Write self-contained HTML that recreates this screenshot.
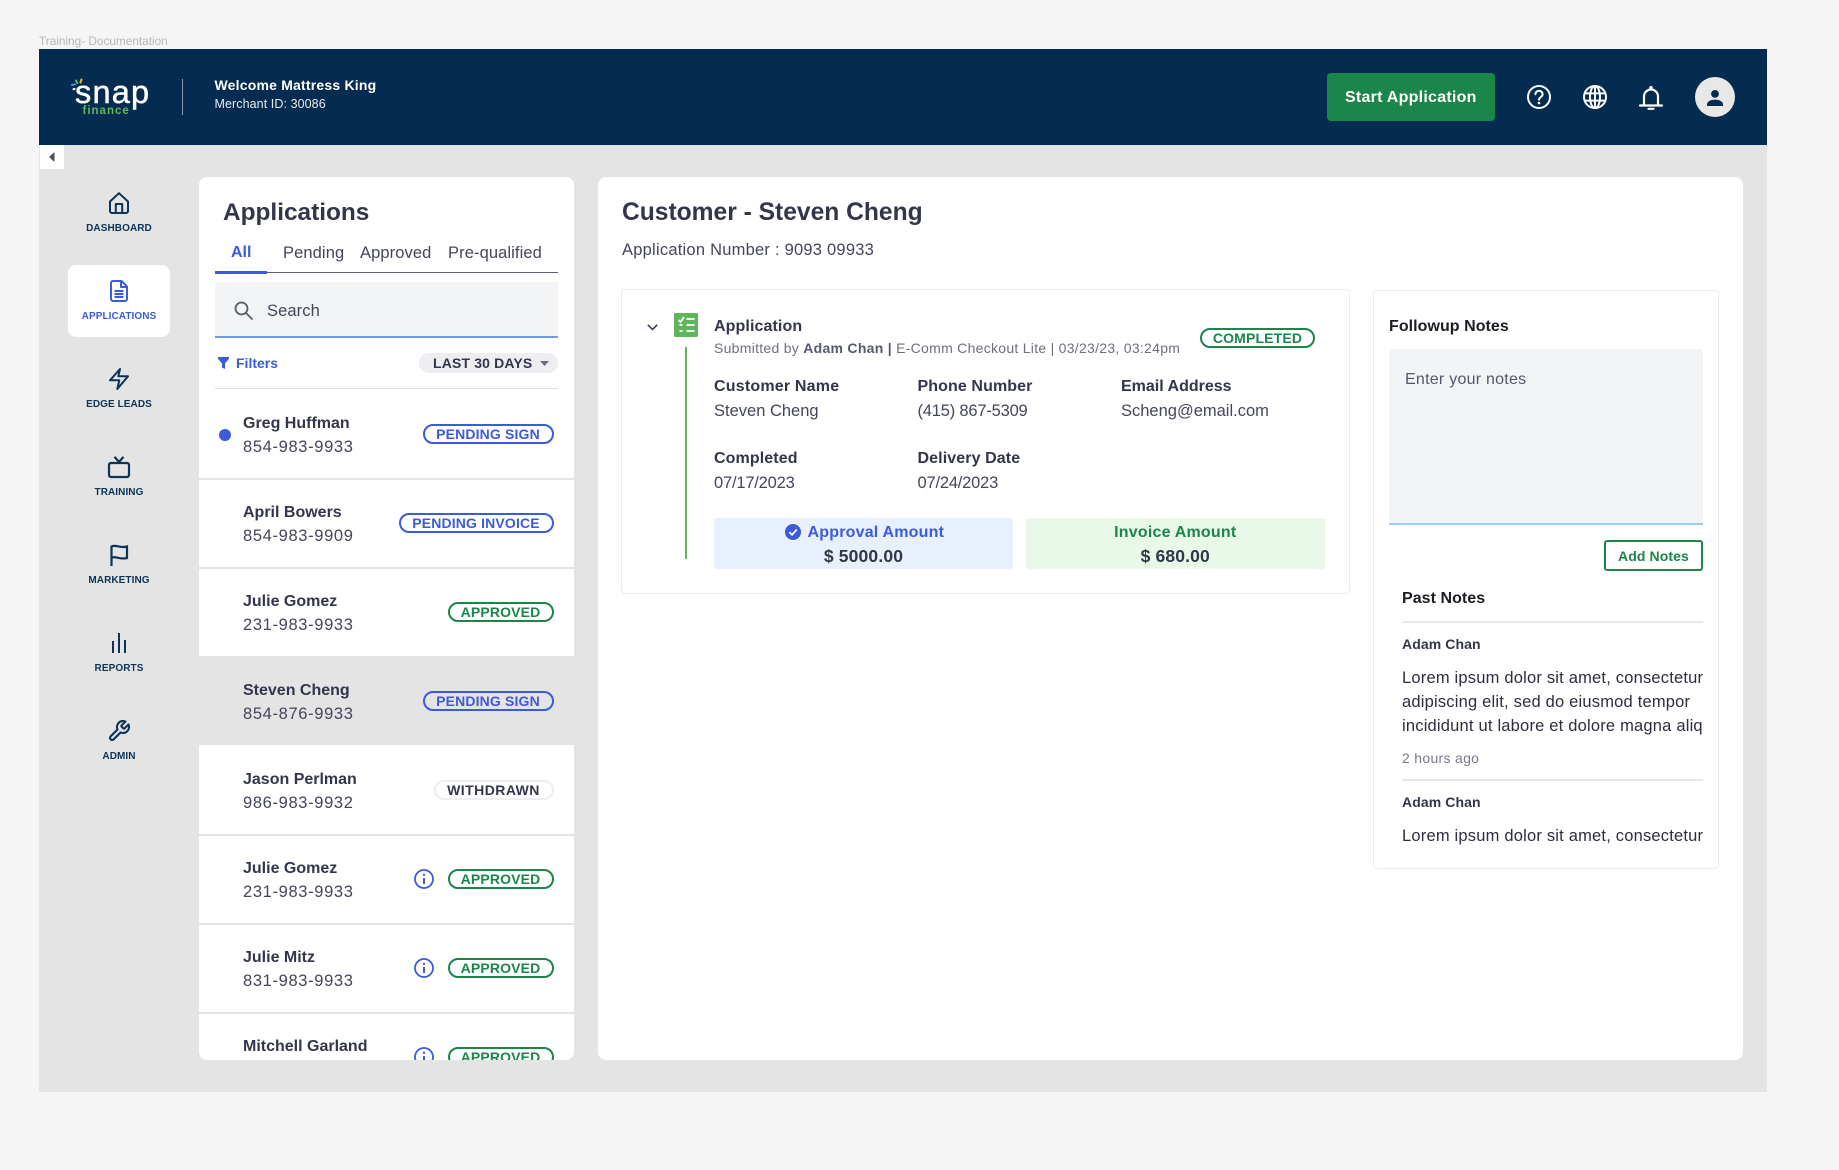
<!DOCTYPE html>
<html lang="en"><head><meta charset="utf-8"><title>Applications</title>
<style>
*{box-sizing:border-box}
html,body{margin:0;padding:0;width:1839px;height:1170px;overflow:hidden;background:#f5f5f5;font-family:"Liberation Sans",sans-serif;color:#33354a}
.a{position:absolute}
.t{position:absolute;white-space:nowrap;line-height:20px;height:20px}
.b{font-weight:700}
svg{position:absolute;display:block;overflow:visible}
.nav{position:absolute;left:68px;width:102px;text-align:center;font-size:10px;font-weight:700;line-height:14px;letter-spacing:.08px;color:#0c3358}
.row{position:absolute;left:0;width:375px;height:91px;border-bottom:2px solid #e4e4e6}
.row.sel{background:#e4e4e4;border-bottom:0;height:89px}
.nm{position:absolute;left:44px;top:25px;font-size:16px;font-weight:700;letter-spacing:0;line-height:20px;white-space:nowrap}
.ph{position:absolute;left:44px;top:48px;font-size:16.5px;letter-spacing:.65px;line-height:20px;white-space:nowrap;color:#44465a}
.pill{position:absolute;right:20.5px;top:35px;height:20px;border:2px solid;border-radius:10px;font-size:14px;font-weight:700;line-height:16px;letter-spacing:.15px;text-align:center;white-space:nowrap}
.pb{color:#3b5bdb;border-color:#3b5bdb}
.pg{color:#1b854a;border-color:#1b854a}
.pw{color:#33354a;border-color:#eeeef2;letter-spacing:.45px}
.lab{font-size:16px;font-weight:700;letter-spacing:.1px}
.val{font-size:16.5px;letter-spacing:0;color:#44465a}
.num{letter-spacing:-.2px}
.lor{left:1402px;width:301px;overflow:hidden;font-size:16.5px;letter-spacing:.2px;color:#2c2e3f}
</style></head><body>

<div class="t" style="left:39px;top:31px;font-size:11.8px;color:#b7b7b7">Training- Documentation</div>

<!-- header -->
<div class="a" style="left:39px;top:49px;width:1728px;height:96px;background:#042c50"></div>
<div class="t" style="left:75px;top:73px;height:38px;line-height:38px;font-size:32.5px;color:#fff;letter-spacing:1.2px;-webkit-text-stroke:.5px #fff">snap</div>
<div class="t" style="left:82.5px;top:101px;font-size:11.5px;font-weight:700;color:#5cb85c;letter-spacing:1px">finance</div>
<svg style="left:70px;top:78px" width="16" height="16" viewBox="0 0 16 16" fill="none" stroke-width="2" stroke-linecap="round"><path d="M6 2.5l1.3 2.5" stroke="#5cb85c"/><path d="M11.5 1.5l-1 3" stroke="#e8b63c"/><path d="M2 7l3 -.7" stroke="#4f8fdc"/><path d="M3.5 11.2l1-.3" stroke="#fff"/></svg>
<div class="a" style="left:181.5px;top:79px;width:1.5px;height:36px;background:#8597ab"></div>
<div class="t b" style="left:214.5px;top:75px;font-size:14px;color:#fff;letter-spacing:.2px">Welcome Mattress King</div>
<div class="t" style="left:214.5px;top:94px;font-size:12.5px;color:#e6eaef;letter-spacing:.08px">Merchant ID: 30086</div>
<div class="a" style="left:1327px;top:73px;width:168px;height:48px;background:#1b854a;border-radius:4px"></div>
<div class="t b" style="left:1345px;top:88px;font-size:16px;color:#fff;letter-spacing:.25px">Start Application</div>

<svg style="left:1527px;top:85px" width="24" height="24" viewBox="0 0 24 24" fill="none" stroke="#fff" stroke-width="2"><circle cx="12" cy="12" r="11"/><path d="M8.4 9.2a3.6 3.6 0 0 1 7.2 .2c0 2.6-3.6 2.8-3.6 5.4" stroke-linecap="round"/><circle cx="12" cy="18" r="1.3" fill="#fff" stroke="none"/></svg>
<svg style="left:1583px;top:85px" width="24" height="24" viewBox="0 0 24 24" fill="none" stroke="#fff" stroke-width="2"><circle cx="12" cy="12" r="11"/><ellipse cx="12" cy="12" rx="5" ry="11"/><path d="M12 1v22M2 8.4h20M2 15.6h20"/></svg>
<svg style="left:1639px;top:85px" width="24" height="26" viewBox="0 0 24 26" fill="none" stroke="#fff" stroke-width="2.2"><path d="M5 20V11.5a7 7 0 0 1 14 0V20"/><path d="M1 20.5h22" stroke-linecap="round"/><circle cx="12" cy="2.8" r="1.8" fill="#fff" stroke="none"/><path d="M9.5 23.8h5" stroke-linecap="round"/></svg>
<div class="a" style="left:1695px;top:77px;width:40px;height:40px;border-radius:50%;background:#e8e8e8"></div>
<svg style="left:1706px;top:90px" width="18" height="16" viewBox="0 0 18 16" fill="#042c50"><circle cx="9" cy="3.9" r="3.9"/><path d="M1 16v-1.8C1 11.2 5.5 9.6 9 9.6s8 1.6 8 4.6V16z"/></svg>

<!-- content bg -->
<div class="a" style="left:39px;top:145px;width:1728px;height:947px;background:#e4e4e4"></div>
<div class="a" style="left:40px;top:145px;width:24px;height:24px;background:#fff"></div>
<svg style="left:49px;top:152px" width="6" height="10" viewBox="0 0 6 10" fill="#4d4f5c"><path d="M5.5 0v10L0 5z"/></svg>

<!-- sidebar -->
<svg style="left:108px;top:192px" width="22" height="22" viewBox="0 0 22 22" fill="none" stroke="#0c3358" stroke-width="2" stroke-linejoin="round"><path d="M2 9.5 11 1.2l9 8.3V19a2 2 0 0 1-2 2H4a2 2 0 0 1-2-2z"/><path d="M7.8 21v-9h6.4v9"/></svg>
<div class="nav" style="top:222px">DASHBOARD</div>

<div class="a" style="left:68px;top:265px;width:102px;height:72px;background:#fff;border-radius:8px"></div>
<svg style="left:109px;top:280px" width="20" height="22" viewBox="0 0 20 22" fill="none" stroke="#3b5bdb" stroke-width="2" stroke-linejoin="round"><path d="M2 3a2 2 0 0 1 2-2h8.5L18 6.500V19a2 2 0 0 1-2 2H4a2 2 0 0 1-2-2z"/><path d="M12 1v6h6"/><path d="M5.500 11h9M5.500 14h9M5.500 17h9"/></svg>
<div class="nav" style="top:310px;color:#3b5bdb">APPLICATIONS</div>

<svg style="left:109px;top:368px" width="20" height="22" viewBox="0 0 20 22" fill="none" stroke="#0c3358" stroke-width="2" stroke-linejoin="round"><path d="M11 1 1 12.300h9.300L8.300 21 19 8.300H9.300z"/></svg>
<div class="nav" style="top:398px">EDGE LEADS</div>

<svg style="left:108px;top:456px" width="22" height="22" viewBox="0 0 22 22" fill="none" stroke="#0c3358" stroke-width="2.200" stroke-linejoin="round"><rect x="1" y="7" width="20" height="14" rx="2"/><path d="M6.500 .8 11 6l4.500-5.200"/></svg>
<div class="nav" style="top:486px">TRAINING</div>

<svg style="left:109px;top:544px" width="20" height="22" viewBox="0 0 20 22" fill="none" stroke="#0c3358" stroke-width="2.200"><path d="M2.500 22V2.500C7 .2 10.500 4.500 18 2.500V14C10.500 16 7 11.500 2.500 14"/></svg>
<div class="nav" style="top:574px">MARKETING</div>

<svg style="left:112px;top:633px" width="14" height="20" viewBox="0 0 14 20" fill="#0c3358"><rect x="0" y="8" width="2" height="12"/><rect x="6" y="0" width="2" height="20"/><rect x="12" y="7" width="2" height="13"/></svg>
<div class="nav" style="top:662px">REPORTS</div>

<svg style="left:107px;top:719px" width="24" height="24" viewBox="0 0 24 24" fill="none" stroke="#0c3358" stroke-width="2.100" stroke-linejoin="round"><path d="M14.700 6.300a1 1 0 0 0 0 1.400l1.600 1.600a1 1 0 0 0 1.400 0l3.770-3.770a6 6 0 0 1-7.940 7.940l-6.910 6.910a2.120 2.120 0 0 1-3-3l6.910-6.910a6 6 0 0 1 7.940-7.940l-3.760 3.760z"/></svg>
<div class="nav" style="top:750px">ADMIN</div>

<!-- applications panel -->
<div class="a" style="left:199px;top:177px;width:375px;height:883px;background:#fff;border-radius:8px;overflow:hidden">
  <div class="t b" style="left:24px;top:21px;height:30px;line-height:30px;font-size:24.400px">Applications</div>
  <div class="t b" style="left:32px;top:66px;font-size:16px;color:#3b5bdb">All</div>
  <div class="t" style="left:84px;top:66px;font-size:16.500px;letter-spacing:.1px;color:#44465a">Pending</div>
  <div class="t" style="left:161px;top:66px;font-size:16.500px;letter-spacing:.1px;color:#44465a">Approved</div>
  <div class="t" style="left:249px;top:66px;font-size:16.500px;letter-spacing:.1px;color:#44465a">Pre-qualified</div>
  <div class="a" style="left:16px;top:95px;width:343px;height:1px;background:#5f6070"></div>
  <div class="a" style="left:16px;top:94px;width:52px;height:3px;background:#3b5bdb"></div>
  <div class="a" style="left:16px;top:105px;width:343px;height:56px;background:#f3f4f6;border-bottom:2px solid #6d9ae2"></div>
  <svg style="left:35px;top:124px" width="19" height="19" viewBox="0 0 19 19" fill="none" stroke="#5a5c6a" stroke-width="1.800"><circle cx="7.500" cy="7.500" r="6"/><path d="M12 12l6 6" stroke-linecap="round"/></svg>
  <div class="t" style="left:68px;top:123.500px;font-size:16.500px;letter-spacing:.1px;color:#44465a">Search</div>
  <svg style="left:19px;top:180px" width="11" height="12" viewBox="0 0 11 12" fill="#3b5bdb"><path d="M0 0h11v1.800L7 6.500V12L4 10.500v-4L0 1.800z"/></svg>
  <div class="t b" style="left:37px;top:176px;font-size:14px;color:#3b5bdb">Filters</div>
  <div class="a" style="left:220px;top:176px;width:139px;height:20px;background:#eeeef2;border-radius:10px"></div>
  <div class="t b" style="left:234px;top:176px;font-size:14px;letter-spacing:.15px">LAST 30 DAYS</div>
  <svg style="left:341px;top:184px" width="9" height="5" viewBox="0 0 9 5" fill="#6a6c7a"><path d="M0 0h9L4.500 5z"/></svg>
  <div class="a" style="left:16px;top:211px;width:343px;height:1px;background:#dedee2"></div>

  <div class="row" style="top:212px">
    <div class="a" style="left:20px;top:40px;width:12px;height:12px;border-radius:50%;background:#3b5bdb"></div>
    <div class="nm">Greg Huffman</div><div class="ph">854-983-9933</div>
    <div class="pill pb" style="width:131px">PENDING SIGN</div>
  </div>
  <div class="row" style="top:301px">
    <div class="nm">April Bowers</div><div class="ph">854-983-9909</div>
    <div class="pill pb" style="width:155px">PENDING INVOICE</div>
  </div>
  <div class="row" style="top:390px;border-bottom:0;height:89px">
    <div class="nm">Julie Gomez</div><div class="ph">231-983-9933</div>
    <div class="pill pg" style="width:106px">APPROVED</div>
  </div>
  <div class="row sel" style="top:479px">
    <div class="nm">Steven Cheng</div><div class="ph">854-876-9933</div>
    <div class="pill pb" style="width:131px">PENDING SIGN</div>
  </div>
  <div class="row" style="top:568px">
    <div class="nm">Jason Perlman</div><div class="ph">986-983-9932</div>
    <div class="pill pw" style="width:120px">WITHDRAWN</div>
  </div>
  <div class="row" style="top:657px">
    <div class="nm">Julie Gomez</div><div class="ph">231-983-9933</div>
    <svg style="left:215px;top:35px" width="20" height="20" viewBox="0 0 20 20" fill="none" stroke="#3b5bdb" stroke-width="1.800"><circle cx="10" cy="10" r="9"/><path d="M10 9v6" stroke-width="2"/><circle cx="10" cy="5.800" r="1.200" fill="#3b5bdb" stroke="none"/></svg>
    <div class="pill pg" style="width:106px">APPROVED</div>
  </div>
  <div class="row" style="top:746px">
    <div class="nm">Julie Mitz</div><div class="ph">831-983-9933</div>
    <svg style="left:215px;top:35px" width="20" height="20" viewBox="0 0 20 20" fill="none" stroke="#3b5bdb" stroke-width="1.800"><circle cx="10" cy="10" r="9"/><path d="M10 9v6" stroke-width="2"/><circle cx="10" cy="5.800" r="1.200" fill="#3b5bdb" stroke="none"/></svg>
    <div class="pill pg" style="width:106px">APPROVED</div>
  </div>
  <div class="row" style="top:835px;border-bottom:0">
    <div class="nm">Mitchell Garland</div>
    <svg style="left:215px;top:35px" width="20" height="20" viewBox="0 0 20 20" fill="none" stroke="#3b5bdb" stroke-width="1.800"><circle cx="10" cy="10" r="9"/><path d="M10 9v6" stroke-width="2"/><circle cx="10" cy="5.800" r="1.200" fill="#3b5bdb" stroke="none"/></svg>
    <div class="pill pg" style="width:106px">APPROVED</div>
  </div>
</div>

<!-- detail panel -->
<div class="a" style="left:598px;top:177px;width:1145px;height:883px;background:#fff;border-radius:8px"></div>
<div class="t b" style="left:622px;top:198px;height:30px;line-height:30px;font-size:24.600px">Customer - Steven Cheng</div>
<div class="t" style="left:622px;top:240px;font-size:16.500px;letter-spacing:.23px;color:#44465a">Application Number : 9093 09933</div>

<div class="a" style="left:621px;top:289px;width:729px;height:305px;border:1.500px solid #ecedf0;border-radius:4px"></div>
<svg style="left:647px;top:324px" width="11" height="7" viewBox="0 0 11 7" fill="none" stroke="#33354a" stroke-width="1.500"><path d="M.8.8 5.500 5.500 10.200.8"/></svg>
<svg style="left:674px;top:313px" width="24" height="24" viewBox="0 0 24 24"><rect width="24" height="24" rx="1.500" fill="#5fb55c"/><g fill="none" stroke="#fff" stroke-width="1.800"><path d="M4.500 7 6.500 9 10 4"/><path d="M12.500 6h8M12.500 12h8M12.500 18h8M5.500 12h3M5.500 18h3"/></g></svg>
<div class="a" style="left:685px;top:347px;width:2px;height:212px;background:#5fb55c"></div>

<div class="t b" style="left:714px;top:317px;font-size:16px;letter-spacing:.1px">Application</div>
<div class="t" style="left:714px;top:338px;font-size:14px;letter-spacing:.28px;color:#6d6f7d">Submitted by <b style="color:#55576a">Adam Chan |</b> E-Comm Checkout Lite | 03/23/23, 03:24pm</div>
<div class="a" style="left:1200px;top:328px;width:115px;height:20px;border:2px solid #1b854a;border-radius:10px;font-size:14px;font-weight:700;line-height:16px;letter-spacing:.15px;text-align:center;color:#1b854a">COMPLETED</div>

<div class="t lab" style="left:714px;top:377px;letter-spacing:.2px">Customer Name</div>
<div class="t val" style="left:714px;top:401px">Steven Cheng</div>
<div class="t lab" style="left:917.500px;top:377px">Phone Number</div>
<div class="t val num" style="left:917.500px;top:401px">(415) 867-5309</div>
<div class="t lab" style="left:1121px;top:377px;letter-spacing:0">Email Address</div>
<div class="t val" style="left:1121px;top:401px">Scheng@email.com</div>
<div class="t lab" style="left:714px;top:449px">Completed</div>
<div class="t val num" style="left:714px;top:473px">07/17/2023</div>
<div class="t lab" style="left:917.500px;top:449px">Delivery Date</div>
<div class="t val num" style="left:917.500px;top:473px">07/24/2023</div>

<div class="a" style="left:714px;top:518px;width:299px;height:51px;background:#e8f0fe;border-radius:3px"></div>
<div class="a" style="left:1025.500px;top:518px;width:299.500px;height:51px;background:#e8f9ea;border-radius:3px"></div>
<svg style="left:785px;top:524px" width="16" height="16" viewBox="0 0 16 16"><circle cx="8" cy="8" r="8" fill="#3b5bdb"/><path d="M4.300 8.200 7 10.800 11.800 5.500" fill="none" stroke="#fff" stroke-width="1.800"/></svg>
<div class="t b" style="left:807.500px;top:523px;font-size:16px;letter-spacing:.2px;color:#3b5bdb">Approval Amount</div>
<div class="t b" style="left:714px;width:299px;text-align:center;top:546px;font-size:17.500px;letter-spacing:.15px">$ 5000.00</div>
<div class="t b" style="left:1025.500px;width:299.500px;text-align:center;top:523px;font-size:16px;letter-spacing:.2px;color:#1b854a">Invoice Amount</div>
<div class="t b" style="left:1025.500px;width:299.500px;text-align:center;top:546px;font-size:17.500px;letter-spacing:.15px">$ 680.00</div>

<!-- notes card -->
<div class="a" style="left:1373px;top:290px;width:346px;height:579px;border:1.500px solid #ecedf0;border-radius:4px"></div>
<div class="t b" style="left:1389px;top:317px;font-size:16px;letter-spacing:.05px;color:#1c1c22">Followup Notes</div>
<div class="a" style="left:1389px;top:349px;width:314px;height:176px;background:#f3f4f6;border-bottom:2px solid #a3c8f5;border-radius:2px 2px 0 0"></div>
<div class="t" style="left:1405px;top:370px;font-size:16px;letter-spacing:.25px;color:#55576a">Enter your notes</div>
<div class="a" style="left:1604px;top:540px;width:99px;height:31px;border:2px solid #1b854a;border-radius:3px;font-size:14px;font-weight:700;line-height:28px;text-align:center;color:#1b854a;letter-spacing:.1px">Add Notes</div>
<div class="t b" style="left:1402px;top:589px;font-size:16px;letter-spacing:.05px;color:#1c1c22">Past Notes</div>
<div class="a" style="left:1402px;top:621px;width:301px;height:2px;background:#e8e8ea"></div>
<div class="t b" style="left:1402px;top:634px;font-size:14px;letter-spacing:.1px">Adam Chan</div>
<div class="t lor" style="top:668px">Lorem ipsum dolor sit amet, consectetur adipiscing</div>
<div class="t lor" style="top:692px">adipiscing elit, sed do eiusmod tempor</div>
<div class="t lor" style="top:716px">incididunt ut labore et dolore magna aliqua</div>
<div class="t" style="left:1402px;top:748px;font-size:14px;letter-spacing:.3px;color:#77798a">2 hours ago</div>
<div class="a" style="left:1402px;top:779px;width:301px;height:2px;background:#e8e8ea"></div>
<div class="t b" style="left:1402px;top:792px;font-size:14px;letter-spacing:.1px">Adam Chan</div>
<div class="t lor" style="top:826px">Lorem ipsum dolor sit amet, consectetur adipiscing</div>

</body></html>
